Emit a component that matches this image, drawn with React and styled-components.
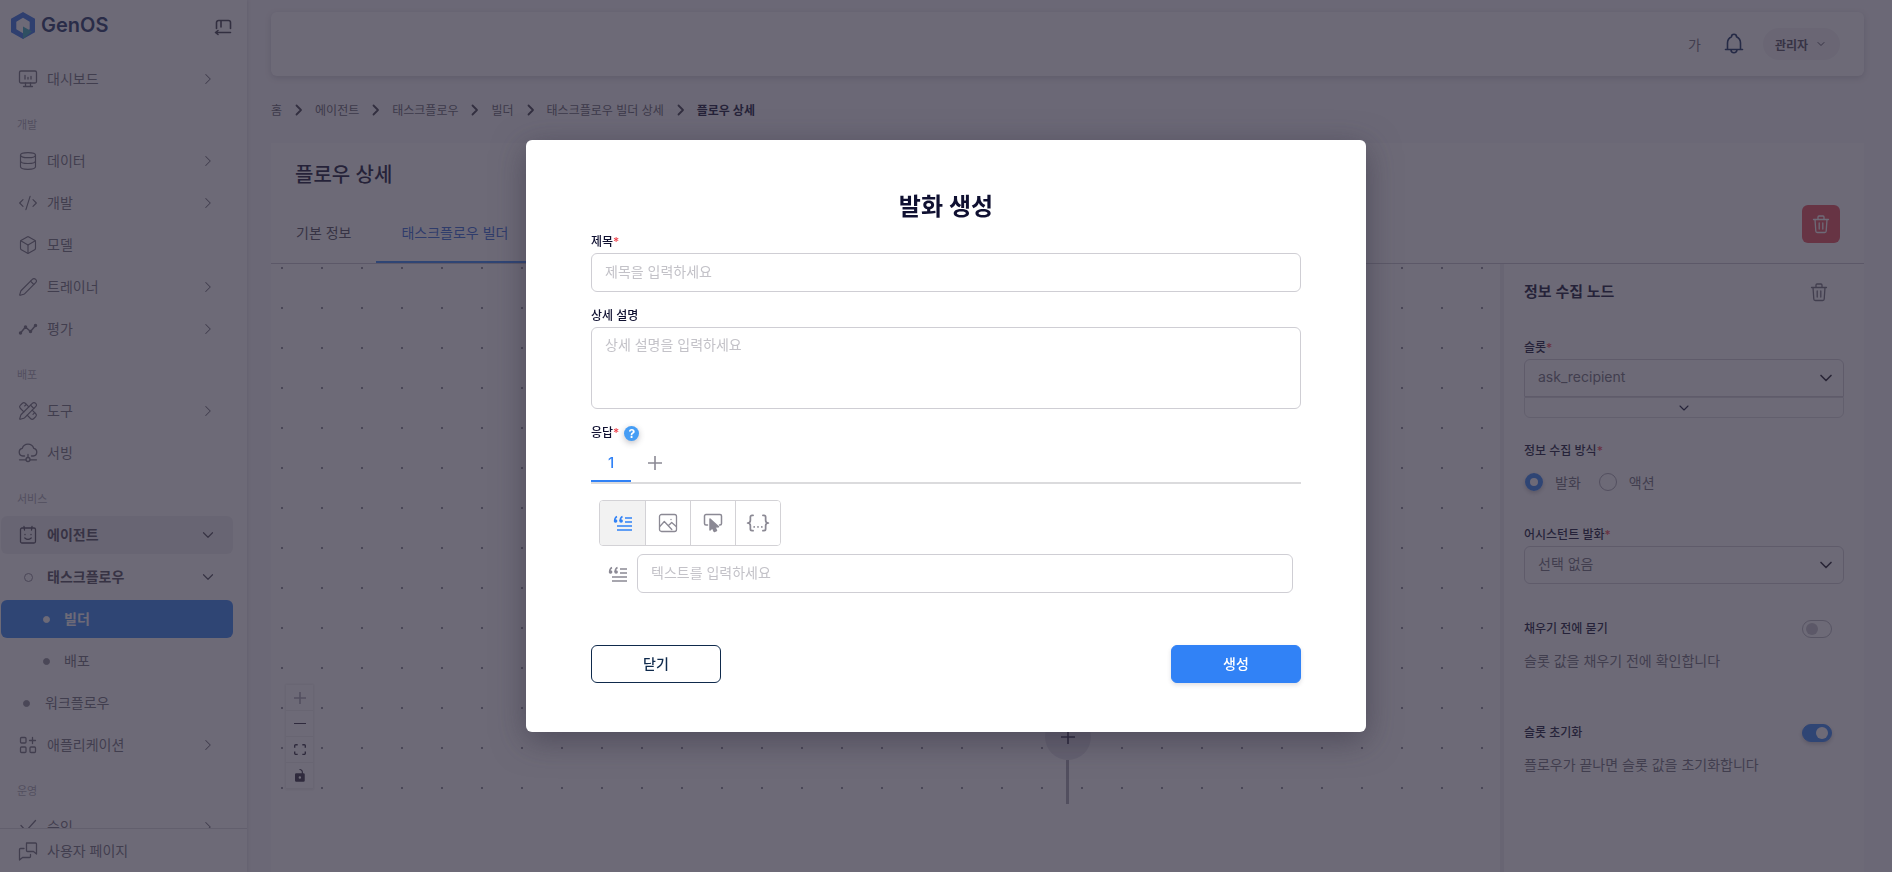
import React from "react";
import styled, { createGlobalStyle, css } from "styled-components";
import {
  Box,
  ChevronDown,
  ChevronRight,
  CodeXml,
  Database,
  Pencil,
  PencilRuler,
} from "lucide-react";

// ---------- Icons ----------

const Svg = ({ size = 20, box = 20, width = 1.3, children, ...rest }) => (
  <svg
    width={size}
    height={size}
    viewBox={`0 0 ${box} ${box}`}
    fill="none"
    stroke="currentColor"
    strokeWidth={width}
    strokeLinecap="round"
    strokeLinejoin="round"
    aria-hidden="true"
    {...rest}
  >
    {children}
  </svg>
);

const LogoMark = () => (
  <svg width="24" height="27" viewBox="0 0 24 27" aria-hidden="true">
    <path
      d="M12 0 24 6.700V20.300L12 27 0 20.300V6.700ZM12 5.800 5.300 9.700V17.300L12 21.200 18.700 17.300V9.700Z"
      fill="#2f6fe4"
      fillRule="evenodd"
    />
    <path d="M12 14.500 21 19.500 12 27Z" fill="#2fa8b8" />
  </svg>
);

const CollapseIcon = () => (
  <Svg size={18} box={18} width={1.6}>
    <path d="M2.500 9.500V3.500a2 2 0 0 1 2-2h10a2 2 0 0 1 2 2v6M7 1.500V8M16.500 13.500H2M4 11.500l-2.500 2 2.500 2" />
  </Svg>
);

const DashboardIcon = () => (
  <Svg>
    <rect x="1.500" y="2" width="17" height="12" rx="1.500" />
    <path d="M7.500 14v3.500M12.500 14v3.500M5.500 17.500h9M7 6.500V10M10 8.500V10M13 7.500V10" />
  </Svg>
);

const EvalIcon = () => (
  <Svg width={1.5}>
    <path d="M2.500 14 7.500 8l5 4.500L17.500 6.500" />
    {[
      [2.5, 14],
      [7.5, 8],
      [12.5, 12.5],
      [17.5, 6.5],
    ].map(([x, y]) => (
      <circle key={x} cx={x} cy={y} r="1" fill="currentColor" />
    ))}
  </Svg>
);

const ServingIcon = () => (
  <Svg>
    <path d="M6.500 13H4.800a3.900 3.900 0 0 1-.5-7.700 6 6 0 0 1 11.400 0 3.900 3.900 0 0 1-.5 7.700H13.500" />
    <path d="M10 11.500v3M1.500 16.800h6.500M12 16.800h6.500" />
    <circle cx="10" cy="16.500" r="2" />
  </Svg>
);

const AgentIcon = () => (
  <Svg>
    <rect x="2.500" y="3" width="15" height="15" rx="1.500" />
    <path d="M6 1.500 6.500 5M14 1.500 13.500 5M6.800 13c2 1.700 4.400 1.700 6.400 0M7 9.500v.2M13 9.500v.2" />
  </Svg>
);

const AppsIcon = () => (
  <Svg>
    <rect x="2.500" y="2.500" width="5.500" height="5.500" rx="1" />
    <rect x="2.500" y="12" width="5.500" height="5.500" rx="1" />
    <rect x="12" y="12" width="5.500" height="5.500" rx="1" />
    <path d="M14.500 2.500v6M11.500 5.500h6" />
  </Svg>
);

const ApproveIcon = () => (
  <Svg>
    <path d="M3 8.500 8 14 17.500 3.500" />
  </Svg>
);

const ChatIcon = () => (
  <Svg>
    <path d="M8.500 2h9a1 1 0 0 1 1 1v10l-3-2.500H9.500a1 1 0 0 1-1-1Z" />
    <path d="M6 7.500H2.500a1 1 0 0 0-1 1V19l3-2.500h7a1 1 0 0 0 1-1V13.500" />
  </Svg>
);

const BellIcon = () => (
  <Svg size={22} box={22} width={1.6}>
    <path d="M2.500 16.500h17M4.500 16.500V10c0-3 1.500-5 4-6.200a2.500 2.500 0 0 1 5 0c2.500 1.200 4 3.200 4 6.200v6.500M8 16.800a3 3 0 0 0 6 0" />
  </Svg>
);

const TrashIcon = () => (
  <Svg>
    <path d="M2.500 5.500h15M4 5.500l.8 11.500a1.500 1.500 0 0 0 1.500 1.500h7.400a1.500 1.500 0 0 0 1.500-1.500L16 5.500M7 5.500V3a1 1 0 0 1 1-1h4a1 1 0 0 1 1 1v2.500M8.200 9v6M11.800 9v6" />
  </Svg>
);

const QuoteIcon = () => (
  <Svg width={1.4} strokeLinecap="butt">
    <path d="M12 5h7M12 9h7M4 13h15M4 17h15" />
    <path d="M4 3.500C2.200 4.300 1.600 5.600 1.600 8M9.500 3.500C7.700 4.300 7.100 5.600 7.100 8" />
    <circle cx="2.600" cy="8" r="1.100" fill="currentColor" />
    <circle cx="8.100" cy="8" r="1.100" fill="currentColor" />
  </Svg>
);

const ImageIcon = () => (
  <Svg>
    <rect x="1.500" y="1.500" width="17" height="17" rx="2" />
    <path d="m1.800 13.500 4.500-5 7.500 8M10.500 12.500l3.200-3 4.500 4M13 6.500v.1" />
  </Svg>
);

const ClickIcon = () => (
  <Svg width={1.5}>
    <path d="M4.500 12H3a1.500 1.500 0 0 1-1.500-1.500V3A1.500 1.500 0 0 1 3 1.500h14A1.500 1.500 0 0 1 18.500 3v7.500A1.500 1.500 0 0 1 17 12h-.5" />
    <path d="M7 6v11l2.500-2.200 1.700 3.700 2.300-1-1.600-3.500 3.600-.2Z" fill="currentColor" />
  </Svg>
);

const BracesIcon = () => (
  <Svg size={24} box={22} width={1.6}>
    <path d="M6.500 4H5.500A1.500 1.500 0 0 0 4 5.500v3C4 10 3 11 1.500 11 3 11 4 12 4 13.500v3A1.500 1.500 0 0 0 5.500 18h1M15.500 4h1A1.500 1.500 0 0 1 18 5.500v3c0 1.500 1 2.500 2.500 2.500-1.500 0-2.500 1-2.500 2.500v3a1.500 1.500 0 0 1-1.500 1.500h-1M7.500 14.500v.1M11 14.500v.1M14.500 14.500v.1" />
  </Svg>
);

const PlusIcon = () => (
  <Svg size={14} box={14} width={1.6} strokeLinecap="butt">
    <path d="M7 0v14M0 7h14" />
  </Svg>
);

const BreadcrumbArrow = () => (
  <Svg size={17} box={17} width={1.8}>
    <path d="m6.500 4.500 4.500 4.500-4.500 4.500" />
  </Svg>
);

const ZOOM_ICONS = [
  {
    name: "zoom in",
    box: "0 0 32 32",
    path: "M32 18.133H18.133V32h-4.266V18.133H0v-4.266h13.867V0h4.266v13.867H32z",
    disabled: true,
  },
  { name: "zoom out", box: "0 0 32 5", path: "M0 0h32v4.200H0z" },
  {
    name: "fit view",
    box: "0 0 32 30",
    path: "M3.692 4.630c0-.530.400-.938.939-.938h5.215V0H4.708C2.130 0 0 2.054 0 4.630v5.216h3.692V4.631zM27.354 0h-5.200v3.692h5.170c.530 0 .984.400.984.939v5.215H32V4.631A4.624 4.624 0 0027.354 0zm.954 24.830c0 .532-.400.940-.939.940h-5.215v3.768h5.215c2.577 0 4.631-2.130 4.631-4.707v-5.139h-3.692v5.139zm-23.677.940c-.531 0-.939-.400-.939-.940v-5.138H0v5.139c0 2.577 2.130 4.707 4.708 4.707h5.138V25.770H4.631z",
  },
  {
    name: "toggle interactivity",
    box: "0 0 25 32",
    width: 10,
    path: "M21.333 10.667H19.810V7.619C19.810 3.429 16.380 0 12.190 0c-4.114 1.828-1.370 2.133.305 2.438 1.676.305 4.420 2.590 4.420 5.181v3.048H3.047A3.056 3.056 0 000 13.714v15.238A3.056 3.056 0 003.048 32h18.285a3.056 3.056 0 003.048-3.048V13.714a3.056 3.056 0 00-3.048-3.047zM12.190 24.533a3.056 3.056 0 01-3.047-3.047 3.056 3.056 0 013.047-3.048 3.056 3.056 0 013.048 3.048 3.056 3.056 0 01-3.048 3.047z",
  },
];

// ---------- Data ----------

const lucide = { size: 20, strokeWidth: 1.4 };

const NAV = [
  { items: [{ label: "대시보드", icon: <DashboardIcon />, arrow: "right" }] },
  {
    title: "개발",
    items: [
      { label: "데이터", icon: <Database {...lucide} />, arrow: "right" },
      { label: "개발", icon: <CodeXml {...lucide} />, arrow: "right" },
      { label: "모델", icon: <Box {...lucide} /> },
      { label: "트레이너", icon: <Pencil {...lucide} />, arrow: "right" },
      { label: "평가", icon: <EvalIcon />, arrow: "right" },
    ],
  },
  {
    title: "배포",
    items: [
      { label: "도구", icon: <PencilRuler {...lucide} />, arrow: "right" },
      { label: "서빙", icon: <ServingIcon /> },
    ],
  },
  {
    title: "서비스",
    items: [
      { label: "에이전트", icon: <AgentIcon />, arrow: "down", open: true, shaded: true },
      { label: "태스크플로우", bullet: "ring", arrow: "down", open: true },
      { label: "빌더", bullet: "dot", depth: 2, active: true },
      { label: "배포", bullet: "dot", depth: 2 },
      { label: "워크플로우", bullet: "dot", depth: 1 },
      { label: "애플리케이션", icon: <AppsIcon />, arrow: "right" },
    ],
  },
  {
    title: "운영",
    items: [{ label: "승인", icon: <ApproveIcon />, arrow: "right" }],
  },
];

const CRUMBS = ["홈", "에이전트", "태스크플로우", "빌더", "태스크플로우 빌더 상세"];

const MESSAGE_TYPES = [
  { name: "텍스트", icon: <QuoteIcon /> },
  { name: "이미지", icon: <ImageIcon /> },
  { name: "버튼", icon: <ClickIcon /> },
  { name: "커스텀", icon: <BracesIcon /> },
];

// ---------- Components ----------

function NavItem({ item }) {
  return (
    <NavLink
      href="#"
      $depth={item.depth}
      $open={item.open}
      $shaded={item.shaded}
      $active={item.active}
    >
      {item.bullet ? (
        <BulletCell $depth={item.depth}>
          <Bullet $ring={item.bullet === "ring"} $active={item.active} />
        </BulletCell>
      ) : (
        item.icon
      )}
      <NavText>{item.label}</NavText>
      {item.arrow === "right" && <ChevronRight size={18} strokeWidth={1.4} />}
      {item.arrow === "down" && <ChevronDown size={18} strokeWidth={1.6} />}
    </NavLink>
  );
}

function Sidebar() {
  return (
    <Aside>
      <Brand>
        <LogoMark />
        <BrandName>GenOS</BrandName>
        <CollapseButton aria-label="메뉴 접기">
          <CollapseIcon />
        </CollapseButton>
      </Brand>
      <Nav>
        {NAV.map((group, i) => (
          <React.Fragment key={i}>
            {group.title && <NavTitle>{group.title}</NavTitle>}
            <NavGroup>
              {group.items.map((item) => (
                <NavItem key={item.label} item={item} />
              ))}
            </NavGroup>
          </React.Fragment>
        ))}
      </Nav>
      <SidebarFooter>
        <NavLink href="#">
          <ChatIcon />
          <NavText>사용자 페이지</NavText>
        </NavLink>
      </SidebarFooter>
    </Aside>
  );
}

function FlowCanvas() {
  return (
    <Canvas>
      <Node aria-label="노드 추가">
        <PlusIcon />
      </Node>
      <Edge />
      <Controls>
        {ZOOM_ICONS.map((icon) => (
          <ControlButton key={icon.name} aria-label={icon.name} disabled={icon.disabled}>
            <svg
              viewBox={icon.box}
              width={icon.width || 12}
              fill="currentColor"
              aria-hidden="true"
            >
              <path d={icon.path} />
            </svg>
          </ControlButton>
        ))}
      </Controls>
    </Canvas>
  );
}

function NodePanel() {
  return (
    <Panel>
      <PanelHead>
        <PanelTitle>정보 수집 노드</PanelTitle>
        <IconButton aria-label="노드 삭제" $muted>
          <TrashIcon />
        </IconButton>
      </PanelHead>

      <PanelField>
        <Label htmlFor="slot">
          슬롯<Required>*</Required>
        </Label>
        <SelectWrap>
          <Select id="slot" $joined>
            <option>ask_recipient</option>
          </Select>
          <ChevronDown size={20} />
        </SelectWrap>
        <Expander aria-label="슬롯 상세 펼치기">
          <ChevronDown size={16} strokeWidth={1.6} />
        </Expander>
      </PanelField>

      <PanelField>
        <Label as="div">
          정보 수집 방식<Required>*</Required>
        </Label>
        <RadioRow>
          <RadioLabel>
            <Radio type="radio" name="method" defaultChecked />
            발화
          </RadioLabel>
          <RadioLabel>
            <Radio type="radio" name="method" />
            액션
          </RadioLabel>
        </RadioRow>
      </PanelField>

      <PanelField>
        <Label htmlFor="utterance">
          어시스턴트 발화<Required>*</Required>
        </Label>
        <SelectWrap>
          <Select id="utterance">
            <option>선택 없음</option>
          </Select>
          <ChevronDown size={20} />
        </SelectWrap>
      </PanelField>

      <SwitchField>
        <SwitchRow>
          <Label htmlFor="ask-before">채우기 전에 묻기</Label>
          <Switch id="ask-before" type="checkbox" />
        </SwitchRow>
        <Hint>슬롯 값을 채우기 전에 확인합니다</Hint>
      </SwitchField>

      <SwitchField>
        <SwitchRow>
          <Label htmlFor="slot-reset">슬롯 초기화</Label>
          <Switch id="slot-reset" type="checkbox" defaultChecked />
        </SwitchRow>
        <Hint>플로우가 끝나면 슬롯 값을 초기화합니다</Hint>
      </SwitchField>
    </Panel>
  );
}

function UtteranceModal() {
  return (
    <Backdrop>
      <Dialog role="dialog" aria-modal="true" aria-labelledby="dialog-title">
        <DialogTitle id="dialog-title">발화 생성</DialogTitle>

        <Field>
          <Label htmlFor="title">
            제목<Required>*</Required>
          </Label>
          <Input id="title" placeholder="제목을 입력하세요" />
        </Field>

        <Field>
          <Label htmlFor="desc">상세 설명</Label>
          <TextArea id="desc" placeholder="상세 설명을 입력하세요" />
        </Field>

        <AnswerLabel>
          <Label as="span">
            응답<Required>*</Required>
          </Label>
          <Help aria-label="도움말">?</Help>
        </AnswerLabel>
        <AnswerTabs role="tablist">
          <AnswerTab role="tab" aria-selected="true" $active>
            1
          </AnswerTab>
          <AnswerTab aria-label="응답 추가">
            <PlusIcon />
          </AnswerTab>
        </AnswerTabs>

        <AnswerBody>
          <TypeGroup>
            {MESSAGE_TYPES.map((type, i) => (
              <TypeButton key={type.name} aria-label={type.name} $active={i === 0}>
                {type.icon}
              </TypeButton>
            ))}
          </TypeGroup>
          <MessageRow>
            <QuoteIcon />
            <Input aria-label="텍스트" placeholder="텍스트를 입력하세요" />
          </MessageRow>
        </AnswerBody>

        <DialogActions>
          <Button>닫기</Button>
          <Button $primary>생성</Button>
        </DialogActions>
      </Dialog>
    </Backdrop>
  );
}

export default function App() {
  return (
    <>
      <GlobalStyle />
      <Layout>
        <Sidebar />
        <Main>
          <TopBar>
            <LangButton>가</LangButton>
            <IconButton aria-label="알림" $navy>
              <BellIcon />
            </IconButton>
            <UserButton>
              관리자
              <ChevronDown size={12} />
            </UserButton>
          </TopBar>

          <Breadcrumb aria-label="breadcrumb">
            {CRUMBS.map((crumb) => (
              <React.Fragment key={crumb}>
                <Crumb href="#">{crumb}</Crumb>
                <BreadcrumbArrow />
              </React.Fragment>
            ))}
            <CurrentCrumb>플로우 상세</CurrentCrumb>
          </Breadcrumb>

          <Card>
            <PageTitle>플로우 상세</PageTitle>
            <TabBar>
              <Tab>기본 정보</Tab>
              <Tab $active>태스크플로우 빌더</Tab>
              <DeleteButton aria-label="삭제">
                <TrashIcon />
              </DeleteButton>
            </TabBar>
            <Workspace>
              <FlowCanvas />
              <NodePanel />
            </Workspace>
          </Card>
        </Main>
      </Layout>
      <UtteranceModal />
    </>
  );
}

// ---------- Styled-components ----------

const GlobalStyle = createGlobalStyle`
  * {
    box-sizing: border-box;
  }
  body {
    margin: 0;
    background: #f8f7fa;
    color: #0f1031;
    overflow: hidden;
  }
  body, button, input, select, textarea {
    font-family: "Inter", "Noto Sans CJK KR", sans-serif;
    font-size: 14px;
  }
  button {
    padding: 0;
    border: 0;
    background: none;
    color: inherit;
    cursor: pointer;
  }
  a {
    color: inherit;
    text-decoration: none;
  }
  svg {
    flex: none;
  }
`;

const Layout = styled.div`
  display: flex;
  height: 100vh;
`;

const Aside = styled.aside`
  display: flex;
  flex-direction: column;
  flex: none;
  width: 247px;
  background: #fff;
  box-shadow: 0 0 4px rgba(47, 43, 61, 0.2);
`;

const Brand = styled.div`
  display: flex;
  align-items: center;
  flex: none;
  gap: 6px;
  height: 56px;
  padding: 0 15px 6px 11px;
`;

const BrandName = styled.span`
  flex: 1;
  color: #1c3163;
  font-size: 20px;
  font-weight: 600;
`;

const IconButton = styled.button`
  display: flex;
  color: ${(p) => (p.$navy ? "#0f2a5c" : p.$muted ? "#6d6b77" : "#3b3947")};
`;

const CollapseButton = styled(IconButton)`
  padding-top: 6px;
`;

const Nav = styled.nav`
  flex: 1;
  min-height: 0;
  padding: 4px 14px 0 1px;
  overflow: hidden;
`;

const NavGroup = styled.div`
  display: flex;
  flex-direction: column;
  gap: 4px;
`;

const NavTitle = styled.div`
  height: 44px;
  padding: 8px 16px 0;
  color: #a5a3ae;
  font-size: 11px;
  line-height: 38px;
`;

const NavLink = styled.a`
  display: flex;
  align-items: center;
  gap: ${(p) => (p.$depth === 2 ? 14 : p.$depth === 1 ? 15 : 9)}px;
  height: 38px;
  padding: 0 16px 0 17px;
  border-radius: 6px;
  color: ${(p) => (p.$active ? "#fff" : p.$open ? "#4b4856" : "#6d6b77")};
  font-weight: ${(p) => (p.$active || p.$open ? 600 : 400)};
  background: ${(p) => (p.$active ? "#3182f6" : p.$shaded ? "#efeff1" : "none")};
`;

const NavText = styled.span`
  flex: 1;
  padding-bottom: 2px;
`;

const BulletCell = styled.span`
  display: flex;
  justify-content: ${(p) => (p.$depth ? "flex-end" : "center")};
  width: ${(p) => (p.$depth === 2 ? 32 : p.$depth === 1 ? 12 : 20)}px;
`;

const Bullet = styled.i`
  width: ${(p) => (p.$ring ? 9 : 7)}px;
  height: ${(p) => (p.$ring ? 9 : 7)}px;
  border: 1px solid currentColor;
  border-radius: 50%;
  background: ${(p) => (p.$ring ? "none" : "currentColor")};
  color: ${(p) => (p.$active ? "#fff" : "#8b8994")};
`;

const SidebarFooter = styled.div`
  flex: none;
  height: 44px;
  padding: 3px 1px;
  border-top: 1px solid #dbdade;
`;

const Main = styled.main`
  display: flex;
  flex: 1;
  flex-direction: column;
  min-width: 0;
  padding: 12px 28px 0 24px;
`;

const TopBar = styled.header`
  display: flex;
  align-items: center;
  justify-content: flex-end;
  flex: none;
  gap: 18px;
  height: 64px;
  padding: 0 24px;
  border-radius: 6px;
  background: #fff;
  box-shadow: 0 2px 6px rgba(47, 43, 61, 0.2);
`;

const LangButton = styled.button`
  padding-right: 4px;
  color: #6d6b77;
`;

const UserButton = styled.button`
  display: flex;
  align-items: center;
  justify-content: space-between;
  width: 77px;
  height: 32px;
  padding: 0 13px 0 12px;
  border-radius: 16px;
  background: #f3f2f5;
  color: #4b4856;
  font-size: 12px;
  font-weight: 600;
`;

const Breadcrumb = styled.nav`
  display: flex;
  align-items: center;
  flex: none;
  gap: 8px;
  height: 67px;
  color: #3b3947;
  font-size: 12px;
`;

const Crumb = styled.a`
  color: #5d5b68;
`;

const CurrentCrumb = styled.span`
  color: #0f1031;
  font-weight: 600;
`;

const Card = styled.section`
  display: flex;
  flex: 1;
  flex-direction: column;
  min-height: 0;
  background: #fff;
`;

const PageTitle = styled.h1`
  flex: none;
  margin: 0;
  padding: 17px 24px 0;
  font-size: 20px;
  font-weight: 500;
  line-height: 30px;
`;

const TabBar = styled.div`
  display: flex;
  align-items: flex-end;
  flex: none;
  height: 74px;
  padding-right: 24px;
  border-bottom: 1px solid #c5c4cb;
`;

const Tab = styled.button`
  height: 58px;
  padding: 0 25px 2px;
  border-bottom: 2px solid ${(p) => (p.$active ? "#3182f6" : "transparent")};
  color: ${(p) => (p.$active ? "#3166d6" : "#4b4856")};
`;

const DeleteButton = styled.button`
  display: grid;
  place-items: center;
  width: 38px;
  height: 38px;
  margin: 0 0 20px auto;
  border-radius: 6px;
  background: #ea4b55;
  color: #fff;
`;

const Workspace = styled.div`
  display: flex;
  flex: 1;
  min-height: 0;
`;

const Canvas = styled.div`
  position: relative;
  flex: 1;
  height: 540px;
  overflow: hidden;
  background-image: radial-gradient(circle, #8b8994 1px, transparent 1px);
  background-position: -9px -16px;
  background-size: 40px 40px;
`;

/* nodes sit at their own place on the flow canvas */
const Node = styled.button`
  position: absolute;
  left: 774px;
  top: 450px;
  display: grid;
  place-items: center;
  width: 46px;
  height: 46px;
  border-radius: 50%;
  background: #e3e2e8;
  color: #1c1a33;
`;

const Edge = styled.i`
  position: absolute;
  left: 795px;
  top: 496px;
  bottom: 0;
  width: 3px;
  background: #a5a3ae;
`;

const Controls = styled.div`
  position: absolute;
  left: 15px;
  bottom: 15px;
  display: grid;
  box-shadow: 0 0 2px 1px rgba(0, 0, 0, 0.08);
`;

const ControlButton = styled.button`
  display: grid;
  place-items: center;
  width: 27px;
  height: 26px;
  border-bottom: 1px solid #eee;
  background: #fff;
  color: ${(p) => (p.disabled ? "#a5a3ae" : "#2f2b3d")};
`;

const Panel = styled.aside`
  flex: none;
  width: 364px;
  padding: 12px 20px 0;
  border-left: 4px solid #efeef2;
`;

const PanelHead = styled.div`
  display: flex;
  align-items: center;
  justify-content: space-between;
  height: 32px;
  padding-right: 15px;
`;

const PanelTitle = styled.h2`
  margin: 0;
  padding-bottom: 3px;
  font-size: 15px;
  font-weight: 600;
`;

const PanelField = styled.div`
  margin-top: 23px;

  ${PanelHead} + & {
    margin-top: 30px;
  }
`;

const Label = styled.label`
  display: block;
  margin-bottom: 1px;
  color: #0f1031;
  font-size: 12px;
  font-weight: 500;
  line-height: 20px;
`;

const Required = styled.span`
  color: #f0444e;
`;

const SelectWrap = styled.div`
  position: relative;

  svg {
    position: absolute;
    right: 8px;
    top: 9px;
    color: #1c1a28;
    pointer-events: none;
  }
`;

const control = css`
  display: block;
  width: 100%;
  border: 1px solid #cfced4;
  border-radius: 6px;
  background: #fff;
  outline: 0;
`;

const Select = styled.select`
  ${control}
  height: 38px;
  padding: 0 36px 3px 13px;
  border-radius: ${(p) => (p.$joined ? "6px 6px 0 0" : "6px")};
  appearance: none;
  color: #6d6b77;
`;

const Expander = styled.button`
  display: grid;
  place-items: center;
  width: 100%;
  height: 21px;
  border: 1px solid #dbdade;
  border-radius: 0 0 6px 6px;
`;

const RadioRow = styled.div`
  display: flex;
  gap: 17px;
  height: 38px;
  padding-top: 2px;
  margin-bottom: 25px;
`;

const RadioLabel = styled.label`
  display: flex;
  align-items: center;
  gap: 12px;
  height: 36px;
  color: #6d6b77;
`;

const Radio = styled.input`
  appearance: none;
  width: 18px;
  height: 18px;
  margin: 0 0 0 1px;
  border: 1px solid #a5a3ae;
  border-radius: 50%;

  &:checked {
    border: 5px solid #3182f6;
    box-shadow: 0 2px 4px rgba(47, 43, 61, 0.3);
  }
`;

const SwitchField = styled.div`
  margin-top: 34px;

  & + & {
    margin-top: 51px;
  }
`;

const SwitchRow = styled.div`
  display: flex;
  align-items: center;
  justify-content: space-between;
  height: 22px;
  padding-right: 12px;
`;

const Switch = styled.input`
  appearance: none;
  width: 30px;
  height: 18px;
  margin: 0;
  padding: 3px;
  border: 1px solid #b5b4bc;
  border-radius: 9px;

  &::before {
    content: "";
    display: block;
    width: 12px;
    height: 12px;
    margin-top: -1px;
    border-radius: 50%;
    background: #c5c4cb;
  }
  &:checked {
    border-color: #3182f6;
    background: #3182f6;
    box-shadow: 0 2px 4px rgba(47, 43, 61, 0.3);
  }
  &:checked::before {
    margin-left: auto;
    background: #fff;
  }
`;

const Hint = styled.p`
  margin: 10px 0 0;
  color: #6d6b77;
  line-height: 21px;
`;

const Backdrop = styled.div`
  position: fixed;
  inset: 0;
  display: flex;
  align-items: center;
  justify-content: center;
  background: rgba(47, 43, 61, 0.7);
`;

const Dialog = styled.div`
  width: 840px;
  max-width: 90%;
  padding: 49px 65px;
  border-radius: 6px;
  background: #fff;
  box-shadow: 0 8px 32px rgba(47, 43, 61, 0.5);
`;

const DialogTitle = styled.h2`
  margin: 0 0 7px;
  font-size: 24px;
  font-weight: 600;
  line-height: 36px;
  text-align: center;
`;

const Field = styled.div`
  margin-bottom: 14px;
`;

const Input = styled.input`
  ${control}
  height: 39px;
  padding: 0 13px 2px;

  &::placeholder {
    color: #c3c2c8;
  }
`;

const TextArea = styled.textarea`
  ${control}
  height: 82px;
  padding: 6px 13px;
  line-height: 21px;
  resize: none;

  &::placeholder {
    color: #c3c2c8;
  }
`;

const AnswerLabel = styled.div`
  display: flex;
  align-items: center;
  gap: 5px;
  height: 20px;

  ${Label} {
    margin: 0;
  }
`;

const Help = styled.button`
  width: 15px;
  height: 15px;
  border-radius: 50%;
  background: #459df5;
  box-shadow: 0 2px 6px rgba(47, 43, 61, 0.3);
  color: #fff;
  font-size: 12px;
  font-weight: 700;
  line-height: 15px;
`;

const AnswerTabs = styled.div`
  display: flex;
  gap: 4px;
  border-bottom: 2px solid #dbdbdd;
`;

const AnswerTab = styled.button`
  display: grid;
  place-items: center;
  width: 40px;
  height: 39px;
  padding-top: 2px;
  border-bottom: 2px solid ${(p) => (p.$active ? "#3182f6" : "transparent")};
  color: ${(p) => (p.$active ? "#3182f6" : "#8b8994")};
  font-size: 15px;
  font-weight: 500;
`;

const AnswerBody = styled.div`
  padding: 16px 8px 0;
`;

const TypeGroup = styled.div`
  display: flex;
  width: max-content;
  border: 1px solid #d3d2d6;
  border-radius: 4px;
  overflow: hidden;
`;

const TypeButton = styled.button`
  display: grid;
  place-items: center;
  width: 45px;
  height: 44px;
  background: ${(p) => (p.$active ? "#f2f2f2" : "#fff")};
  color: ${(p) => (p.$active ? "#3182f6" : "#8b8994")};

  & + & {
    border-left: 1px solid #d3d2d6;
  }
`;

const MessageRow = styled.div`
  display: flex;
  align-items: center;
  gap: 9px;
  margin-top: 8px;
  padding-left: 9px;
  color: #8b8994;
`;

const DialogActions = styled.div`
  display: flex;
  justify-content: space-between;
  margin-top: 52px;
`;

const Button = styled.button`
  width: 130px;
  height: 38px;
  padding-bottom: 2px;
  border: 1px solid ${(p) => (p.$primary ? "#3182f6" : "#0f2a4c")};
  border-radius: 6px;
  background: ${(p) => (p.$primary ? "#3182f6" : "#fff")};
  box-shadow: ${(p) => (p.$primary ? "0 2px 4px rgba(47, 43, 61, 0.15)" : "none")};
  color: ${(p) => (p.$primary ? "#fff" : "#0f2a4c")};
  font-weight: 500;
`;
